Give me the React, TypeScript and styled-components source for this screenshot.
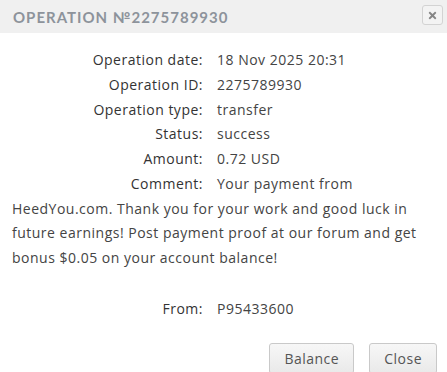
import React from 'react';
import styled, { createGlobalStyle } from 'styled-components';
import { FaTimes } from 'react-icons/fa';

const GlobalStyle = createGlobalStyle`
  html, body {
    margin: 0;
    padding: 0;
    background: #ffffff;
  }
  body {
    font-family: 'Open Sans', 'Liberation Sans', sans-serif;
  }
`;

const Dialog = styled.div`
  width: 447px;
  height: 372px;
  overflow: hidden;
  background: #fff;
  display: flex;
  flex-direction: column;
`;

const TitleBar = styled.div`
  height: 33px;
  flex-shrink: 0;
  background: #f0f0f0;
  display: flex;
  align-items: center;
  justify-content: space-between;
  padding: 0 4px 0 13px;
  box-sizing: border-box;
`;

const Title = styled.div`
  font-family: 'Lato', 'DejaVu Sans', sans-serif;
  font-size: 15px;
  font-weight: 700;
  letter-spacing: 1px;
  color: #8d939b;
`;

const CloseIcon = styled.button`
  width: 21px;
  height: 20px;
  margin-top: -3px;
  padding: 0;
  border: 1px solid #d3d3d3;
  border-radius: 3px;
  background: #f3f3f3;
  color: #858585;
  display: flex;
  align-items: center;
  justify-content: center;
`;

const Body = styled.div`
  padding: 15px 12px 0 12px;
  font-size: 14px;
  line-height: 24.75px;
  letter-spacing: 0.5px;
  color: #444;
`;

const Row = styled.div<{ $gapTop?: number }>`
  margin-top: ${(p) => p.$gapTop ?? 0}px;
`;

const Label = styled.span`
  display: inline-block;
  width: 191px;
  text-align: right;
  margin-right: 14px;
  color: #333;
`;

const Value = styled.span`
  color: #444;
`;

const Footer = styled.div`
  display: flex;
  justify-content: flex-end;
  gap: 15px;
  padding: 21px 10px 0 0;
`;

const Button = styled.button`
  height: 31px;
  flex-shrink: 0;
  padding: 0 14px;
  font-family: 'Open Sans', 'Liberation Sans', sans-serif;
  font-size: 14px;
  letter-spacing: 0.5px;
  color: #555;
  border: 1px solid #c9c9c9;
  border-radius: 3px;
  background: linear-gradient(#f7f7f7, #e9e9e9);
`;

const rows: [string, string][] = [
  ['Operation date:', '18 Nov 2025 20:31'],
  ['Operation ID:', '2275789930'],
  ['Operation type:', 'transfer'],
  ['Status:', 'success'],
  ['Amount:', '0.72 USD'],
  [
    'Comment:',
    'Your payment from HeedYou.com. Thank you for your work and good luck in future earnings! Post payment proof at our forum and get bonus $0.05 on your account balance!',
  ],
];

export default function App() {
  return (
    <>
      <GlobalStyle />
      <Dialog>
        <TitleBar>
          <Title>OPERATION №2275789930</Title>
          <CloseIcon aria-label="close">
            <FaTimes size={11} />
          </CloseIcon>
        </TitleBar>
        <Body>
          {rows.map(([label, value]) => (
            <Row key={label}>
              <Label>{label}</Label>
              <Value>{value}</Value>
            </Row>
          ))}
          <Row $gapTop={26}>
            <Label>From:</Label>
            <Value>P95433600</Value>
          </Row>
        </Body>
        <Footer>
          <Button>Balance</Button>
          <Button>Close</Button>
        </Footer>
      </Dialog>
    </>
  );
}
